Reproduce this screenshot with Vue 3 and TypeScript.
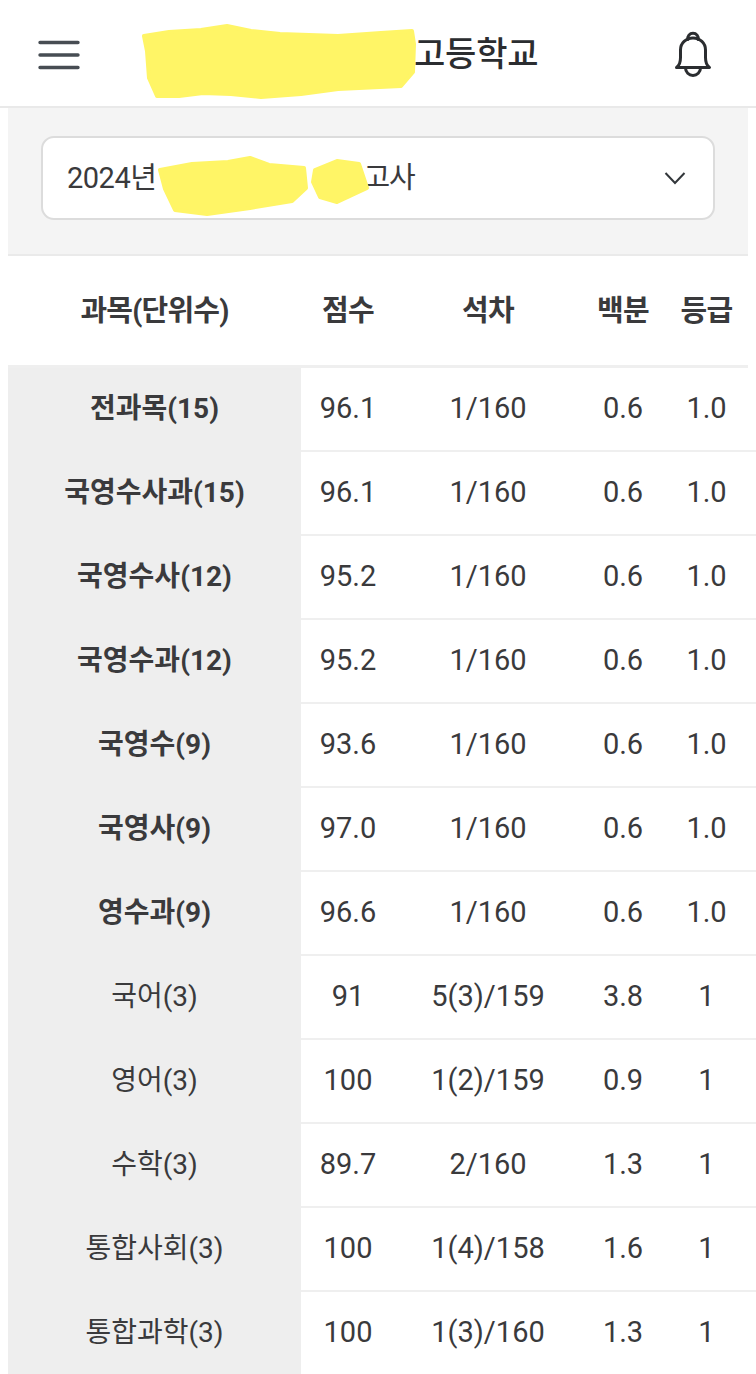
<script setup lang="ts">
interface Row { name: string; score: string; rank: string; pct: string; grade: string; bold?: boolean }
const rows: Row[] = [
  { name: '전과목(15)', score: '96.1', rank: '1/160', pct: '0.6', grade: '1.0', bold: true },
  { name: '국영수사과(15)', score: '96.1', rank: '1/160', pct: '0.6', grade: '1.0', bold: true },
  { name: '국영수사(12)', score: '95.2', rank: '1/160', pct: '0.6', grade: '1.0', bold: true },
  { name: '국영수과(12)', score: '95.2', rank: '1/160', pct: '0.6', grade: '1.0', bold: true },
  { name: '국영수(9)', score: '93.6', rank: '1/160', pct: '0.6', grade: '1.0', bold: true },
  { name: '국영사(9)', score: '97.0', rank: '1/160', pct: '0.6', grade: '1.0', bold: true },
  { name: '영수과(9)', score: '96.6', rank: '1/160', pct: '0.6', grade: '1.0', bold: true },
  { name: '국어(3)', score: '91', rank: '5(3)/159', pct: '3.8', grade: '1' },
  { name: '영어(3)', score: '100', rank: '1(2)/159', pct: '0.9', grade: '1' },
  { name: '수학(3)', score: '89.7', rank: '2/160', pct: '1.3', grade: '1' },
  { name: '통합사회(3)', score: '100', rank: '1(4)/158', pct: '1.6', grade: '1' },
  { name: '통합과학(3)', score: '100', rank: '1(3)/160', pct: '1.3', grade: '1' },
]
</script>

<template>
  <div class="page">
    <header class="top">
      <svg class="menu" width="42" height="30" viewBox="0 0 42 30" fill="none" stroke="#474d53" stroke-width="3.4" stroke-linecap="round">
        <path d="M2 2.500H40M2 15H40M2 27.500H40" />
      </svg>
      <div class="title">
        <svg class="blot-a" width="276" height="76" viewBox="0 0 276 76">
          <path fill="#fff566" stroke="#fff566" stroke-width="4" stroke-linejoin="round" d="M3 12 L28 8 L60 6 L86 2 L110 7 L139 10 L197 12 L240 9 L271 7 L273 20 L272 48 L260 62 L197 65 L160 70 L120 73 L90 70 L62 69 L38 72 L16 72 L8 54 L6 27 Z" />
        </svg>
        <span class="title-text">고등학교</span>
      </div>
      <svg class="bell" width="38" height="48" viewBox="0 0 38 48" fill="none" stroke="#2b2d30" stroke-width="3" stroke-linejoin="round" stroke-linecap="round">
        <path d="M13.800 10.500a5.300 5.300 0 1 1 10.400 0" />
        <path d="M2.500 38.500c3-2 4-5.500 4-10V21c0-7 5.500-12 12.500-12s12.500 5 12.500 12v7.500c0 4.500 1 8 4 10Z" />
        <path d="M11.500 39a7.500 7.500 0 0 0 15 0" />
      </svg>
    </header>

    <section class="filter">
      <div class="select">
        <span class="select-text">2024년</span>
        <svg class="blot-b" width="212" height="62" viewBox="0 0 212 62">
          <path fill="#fff566" stroke="#fff566" stroke-width="4" stroke-linejoin="round" d="M2 15 L34 9 L70 7 L92 3 L111 10 L146 13 L148 33 L134 46 L92 53 L49 59 L17 55 L7 34 Z" />
          <path fill="#fff566" stroke="#fff566" stroke-width="4" stroke-linejoin="round" d="M157 15 L179 6 L201 9 L209 33 L179 47 L162 42 L155 27 Z" />
        </svg>
        <span class="select-text tail">고사</span>
        <svg class="chev" width="24" height="16" viewBox="0 0 24 16" fill="none" stroke="#33373b" stroke-width="2">
          <path d="M2.500 3 L12 13 L21.500 3" />
        </svg>
      </div>
    </section>

    <div class="grid head">
      <div class="cell">과목(단위수)</div>
      <div class="cell">점수</div>
      <div class="cell">석차</div>
      <div class="cell">백분</div>
      <div class="cell">등급</div>
    </div>

    <div class="body">
      <div v-for="r in rows" :key="r.name" class="grid row">
        <div class="cell name" :class="{ strong: r.bold }">{{ r.name }}</div>
        <div class="cell">{{ r.score }}</div>
        <div class="cell">{{ r.rank }}</div>
        <div class="cell">{{ r.pct }}</div>
        <div class="cell">{{ r.grade }}</div>
      </div>
    </div>
  </div>
</template>

<style>
html, body { margin: 0; background: #fff; }
</style>

<style scoped>
.page {
  width: 756px;
  height: 1374px;
  overflow: hidden;
  background: #fff;
  color: #3a3a3c;
  font-family: Roboto, "Noto Sans CJK KR", sans-serif;
}
.top {
  height: 106px;
  border-bottom: 2px solid #e9e9e9;
  display: flex;
  align-items: center;
  padding: 0 44px 0 38px;
}
.menu { flex: none; margin-top: 3px; }
.bell { flex: none; }
.title {
  flex: none;
  height: 106px;
  margin-left: 61px;
  margin-right: auto;
  display: flex;
  align-items: center;
}
.blot-a { flex: none; align-self: flex-start; margin-top: 24px; position: relative; z-index: 1; }
.title-text {
  font-size: 34px;
  font-weight: 500;
  color: #2b2d30;
  letter-spacing: -0.2px;
  margin-left: -3px;
  padding-bottom: 3px;
}
.filter {
  margin: 0 8px;
  height: 148px;
  box-sizing: border-box;
  padding: 28px 33px 0 33px;
  background: #f4f4f4;
  border-bottom: 2px solid #eaeaea;
}
.select {
  height: 84px;
  box-sizing: border-box;
  background: #fff;
  border: 2px solid #dcdcdc;
  border-radius: 13px;
  display: flex;
  align-items: center;
  padding: 0 26px 0 24px;
}
.select-text { font-size: 29px; color: #3a3a3c; letter-spacing: -0.5px; padding-bottom: 7px; }
.blot-b { flex: none; align-self: flex-start; margin: 17px 0 0 2px; position: relative; z-index: 1; }
.tail { margin-left: -7px; letter-spacing: -1px; }
.chev { margin-left: auto; }
.grid {
  display: grid;
  grid-template-columns: 293px 94px 186px 84px 83px;
  margin-left: 8px;
  width: 740px;
}
.head {
  font-size: 29px;
  font-weight: 700;
  border-bottom: 3px solid #efefef;
  box-sizing: content-box;
  height: 109px;
  letter-spacing: -0.8px;
}
.head .cell { padding-bottom: 6px; }
.cell {
  display: flex;
  align-items: center;
  justify-content: center;
  white-space: nowrap;
}
.row {
  height: 84px;
  font-size: 29px;
  box-sizing: border-box;
  width: 748px;
  border-bottom: 2px solid #efefef;
  grid-template-columns: 293px 94px 186px 84px 83px 8px;
}
.row .cell { padding-bottom: 2px; }
.row .name {
  background: #eeeeee;
  margin-bottom: -2px;
  font-size: 28px;
  padding-bottom: 8px;
}
.strong { font-weight: 700; }
</style>
